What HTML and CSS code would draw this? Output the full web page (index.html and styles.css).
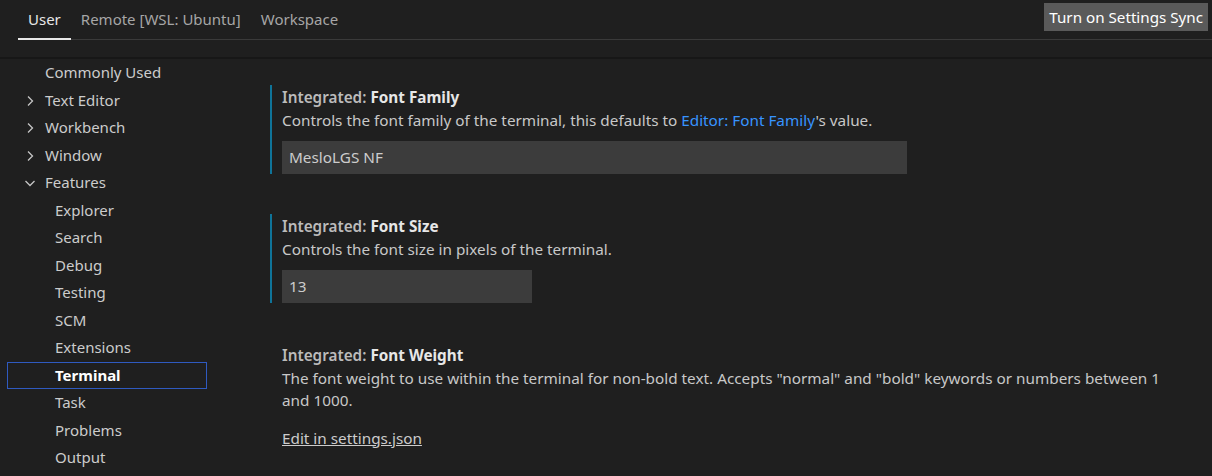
FILE: index.html
```html
<!DOCTYPE html>
<html>
<head>
<meta charset="utf-8">
<link rel="stylesheet" href="styles.css">
</head>
<body>
<div class="header">
  <div class="tabs">
    <div class="tab active">User</div>
    <div class="tab">Remote [WSL: Ubuntu]</div>
    <div class="tab">Workspace</div>
    <div class="tabline"></div>
  </div>
  <button class="sync">Turn on Settings Sync</button>
</div>
<div class="main">
  <nav class="toc">
    <div class="item">Commonly Used</div>
    <div class="item"><svg class="chev" viewBox="0 0 16 16"><path d="M6 3.5 10.5 8 6 12.5"/></svg>Text Editor</div>
    <div class="item"><svg class="chev" viewBox="0 0 16 16"><path d="M6 3.5 10.5 8 6 12.5"/></svg>Workbench</div>
    <div class="item"><svg class="chev" viewBox="0 0 16 16"><path d="M6 3.5 10.5 8 6 12.5"/></svg>Window</div>
    <div class="item"><svg class="chev" viewBox="0 0 16 16"><path d="M3.5 6 8 10.5 12.5 6"/></svg>Features</div>
    <div class="item sub">Explorer</div>
    <div class="item sub">Search</div>
    <div class="item sub">Debug</div>
    <div class="item sub">Testing</div>
    <div class="item sub">SCM</div>
    <div class="item sub">Extensions</div>
    <div class="item sub selected">Terminal</div>
    <div class="item sub">Task</div>
    <div class="item sub">Problems</div>
    <div class="item sub">Output</div>
  </nav>
  <section class="content">
    <div class="setting modified">
      <div class="title"><span class="cat">Integrated: </span><span class="name">Font Family</span></div>
      <div class="desc">Controls the font family of the terminal, this defaults to <span class="link">Editor: Font Family</span>'s value.</div>
      <div class="input wide">MesloLGS NF</div>
    </div>
    <div class="setting modified">
      <div class="title"><span class="cat">Integrated: </span><span class="name">Font Size</span></div>
      <div class="desc">Controls the font size in pixels of the terminal.</div>
      <div class="input narrow">13</div>
    </div>
    <div class="setting">
      <div class="title"><span class="cat">Integrated: </span><span class="name">Font Weight</span></div>
      <div class="desc">The font weight to use within the terminal for non-bold text. Accepts "normal" and "bold" keywords or numbers between 1 and 1000.</div>
      <div class="edit">Edit in settings.json</div>
    </div>
  </section>
</div>
</body>
</html>
```

FILE: styles.css
```css
* { box-sizing: border-box; }
html, body { margin: 0; padding: 0; }
body {
  width: 1212px;
  height: 476px;
  overflow: hidden;
  background: #1f1f1f;
  font-family: "Segoe UI", "Noto Sans", sans-serif;
  font-size: 15px;
  color: #cccccc;
}
.header {
  height: 59px;
  display: flex;
  align-items: flex-start;
  padding: 0 4px 0 18px;
  border-bottom: 2px solid #171717;
}
.tabs {
  flex: 1;
  display: flex;
  height: 40px;
  align-items: stretch;
}
.tab {
  padding: 0 10px;
  line-height: 39px;
  color: #a6a6a6;
  border-bottom: 1px solid #3a3a3a;
  white-space: nowrap;
}
.tab.active {
  color: #e7e7e7;
  border-bottom: 2px solid #e7e7e7;
  line-height: 38px;
}
.tabline {
  flex: 1;
  border-bottom: 1px solid #3a3a3a;
}
.sync {
  margin-top: 3px;
  margin-left: -168px;
  position: relative;
  background: #5a5a5a;
  color: #ffffff;
  border: none;
  font-family: inherit;
  font-size: 15.2px;
  height: 28px;
  padding: 0 5px;
  white-space: nowrap;
}
.main {
  display: flex;
}
.toc {
  width: 260px;
  padding-left: 7px;
}
.item {
  width: 200px;
  height: 27.5px;
  line-height: 27.5px;
  padding-left: 38px;
  display: flex;
  align-items: center;
  color: #cccccc;
  position: relative;
  white-space: nowrap;
}
.item.sub { padding-left: 48px; }
.chev {
  position: absolute;
  left: 15px;
  top: 6px;
  width: 16px;
  height: 16px;
  fill: none;
  stroke: #c5c5c5;
  stroke-width: 1.3;
}
.item.selected {
  border: 1px solid #2f5ac0;
  padding-left: 47px;
  color: #ffffff;
  font-weight: 700;
}
.content {
  flex: 1;
  padding-left: 10px;
  padding-top: 26px;
  font-size: 15.3px;
}
.setting {
  padding-left: 10px;
  padding-top: 1px;
  border-left: 2px solid transparent;
  margin-bottom: 40px;
}
.setting.modified { border-left-color: #0f7499; }
.title {
  line-height: 22.5px;
  color: #e7e7e7;
  font-weight: 700;
}
.title .cat { color: #bbbbbb; font-weight: 600; }
.desc {
  line-height: 22.5px;
  color: #c8c8c8;
  max-width: 895px;
}
.link { color: #3794ff; }
.input {
  margin-top: 10px;
  height: 33px;
  line-height: 33px;
  background: #3c3c3c;
  color: #cccccc;
  padding-left: 7px;
  margin-bottom: 1px;
}
.input.wide { width: 625px; }
.input.narrow { width: 250px; }
.edit {
  margin-top: 15px;
  color: #cccccc;
  text-decoration: underline;
  line-height: 22px;
}
```
